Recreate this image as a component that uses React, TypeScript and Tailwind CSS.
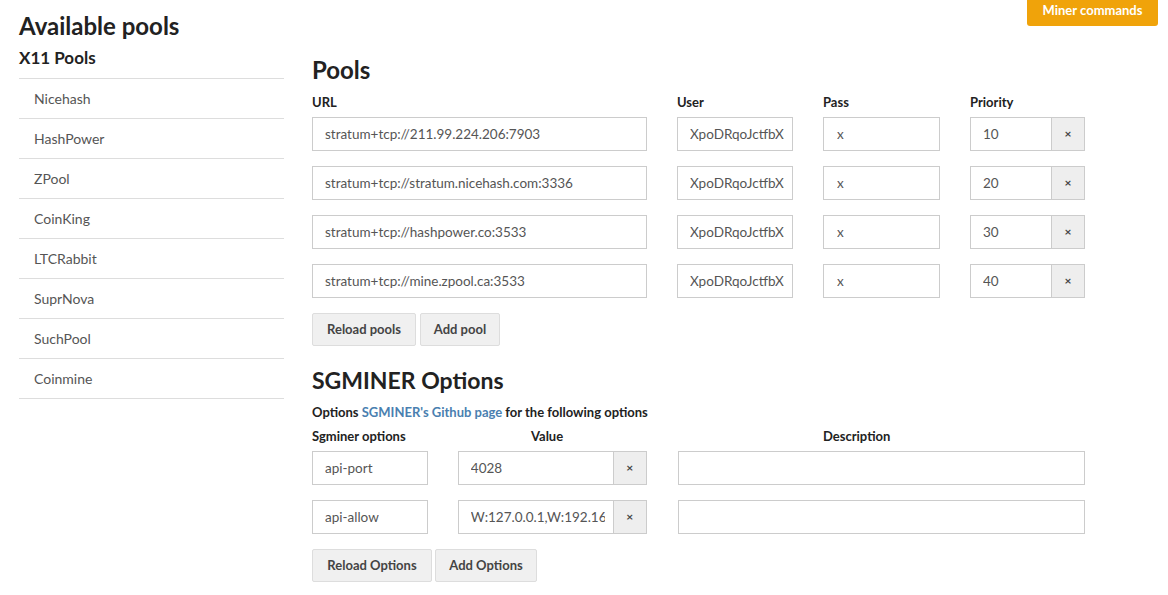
import React from "react";

const pools = [
  { url: "stratum+tcp://211.99.224.206:7903", prio: "10" },
  { url: "stratum+tcp://stratum.nicehash.com:3336", prio: "20" },
  { url: "stratum+tcp://hashpower.co:3533", prio: "30" },
  { url: "stratum+tcp://mine.zpool.ca:3533", prio: "40" },
];

const sidebar = ["Nicehash", "HashPower", "ZPool", "CoinKing", "LTCRabbit", "SuprNova", "SuchPool", "Coinmine"];

function Field({ value, className }: { value: string; className: string }) {
  return (
    <div className={"h-[34px] border border-[#cccccc] bg-white flex items-center pl-[12px] pr-[8px] text-[13.5px] text-[#555555] " + className}>
      <span className="block overflow-hidden whitespace-nowrap">{value}</span>
    </div>
  );
}

function XBtn() {
  return (
    <div className="h-[34px] w-[33px] border border-l-0 border-[#cccccc] bg-[#eeeeee] flex items-center justify-center text-[12px] font-bold text-[#444]">
      ×
    </div>
  );
}

function Btn({ children, w }: { children: React.ReactNode; w: string }) {
  return (
    <div className={"h-[33px] border border-[#dddddd] bg-[#f0f0f0] rounded-[2px] flex items-center justify-center text-[13px] font-bold text-[#444] " + w}>
      {children}
    </div>
  );
}

export default function App() {
  return (
    <div className="w-[1168px] h-[595px] bg-white text-[#222] overflow-hidden" style={{ fontFamily: "Lato, 'Open Sans', sans-serif" }}>
      <div className="flex justify-between h-[45px]">
        <h1 className="pl-[19px] pt-[11px] text-[24px] leading-[30px] font-bold text-[#222]">Available pools</h1>
        <div className="mr-[10px] w-[131px] h-[26px] pb-[4px] bg-[#f0a30a] rounded-b-[3px] flex items-center justify-center text-[13px] font-bold text-white">
          Miner commands
        </div>
      </div>
      <div className="flex">
        <div className="ml-[19px] w-[265px]">
          <div className="h-[33px] text-[17px] leading-[26px] font-bold">X11 Pools</div>
          <ul className="border-b border-[#dddddd]">
            {sidebar.map((s) => (
              <li key={s} className="h-[40px] border-t border-[#dddddd] flex items-center pl-[15px] text-[14px] text-[#555]">
                {s}
              </li>
            ))}
          </ul>
        </div>
        <div className="ml-[28px] w-[773px]">
          <h2 className="mt-[10px] text-[24px] leading-[30px] font-bold">Pools</h2>
          <div className="mt-[8px] flex text-[13px] leading-[18px] font-bold">
            <div className="w-[335px]">URL</div>
            <div className="ml-[30px] w-[116px]">User</div>
            <div className="ml-[30px] w-[117px]">Pass</div>
            <div className="ml-[30px] w-[115px]">Priority</div>
          </div>
          <div className="mt-[6px] flex flex-col gap-[15px]">
            {pools.map((p) => (
              <div key={p.prio} className="flex">
                <Field value={p.url} className="w-[335px]" />
                <Field value="XpoDRqoJctfbXs" className="ml-[30px] w-[116px]" />
                <Field value="x" className="ml-[30px] w-[117px] pl-[13px]" />
                <div className="ml-[30px] flex">
                  <Field value={p.prio} className="w-[82px]" />
                  <XBtn />
                </div>
              </div>
            ))}
          </div>
          <div className="mt-[15px] flex gap-[4px]">
            <Btn w="w-[104px]">Reload pools</Btn>
            <Btn w="w-[80px]">Add pool</Btn>
          </div>
          <h2 className="mt-[19px] text-[23px] leading-[30px] font-bold">SGMINER Options</h2>
          <p className="mt-[8px] text-[13px] leading-[18px] font-bold">
            Options <span className="text-[#4a7fb0]">SGMINER's Github page</span> for the following options
          </p>
          <div className="mt-[6px] flex text-[13px] leading-[18px] font-bold">
            <div className="w-[116px]">Sgminer options</div>
            <div className="ml-[30px] w-[188px] pl-[73px]">Value</div>
            <div className="ml-[31px] w-[408px] pl-[146px]">Description</div>
          </div>
          <div className="mt-[6px] flex flex-col gap-[15px]">
            {[
              { k: "api-port", v: "4028" },
              { k: "api-allow", v: "W:127.0.0.1,W:192.168.0.0/16" },
            ].map((r) => (
              <div key={r.k} className="flex">
                <Field value={r.k} className="w-[116px]" />
                <div className="ml-[30px] flex">
                  <Field value={r.v} className="w-[156px]" />
                  <XBtn />
                </div>
                <Field value="" className="ml-[31px] w-[408px]" />
              </div>
            ))}
          </div>
          <div className="mt-[15px] flex gap-[3px]">
            <Btn w="w-[120px]">Reload Options</Btn>
            <Btn w="w-[102px]">Add Options</Btn>
          </div>
        </div>
      </div>
    </div>
  );
}
